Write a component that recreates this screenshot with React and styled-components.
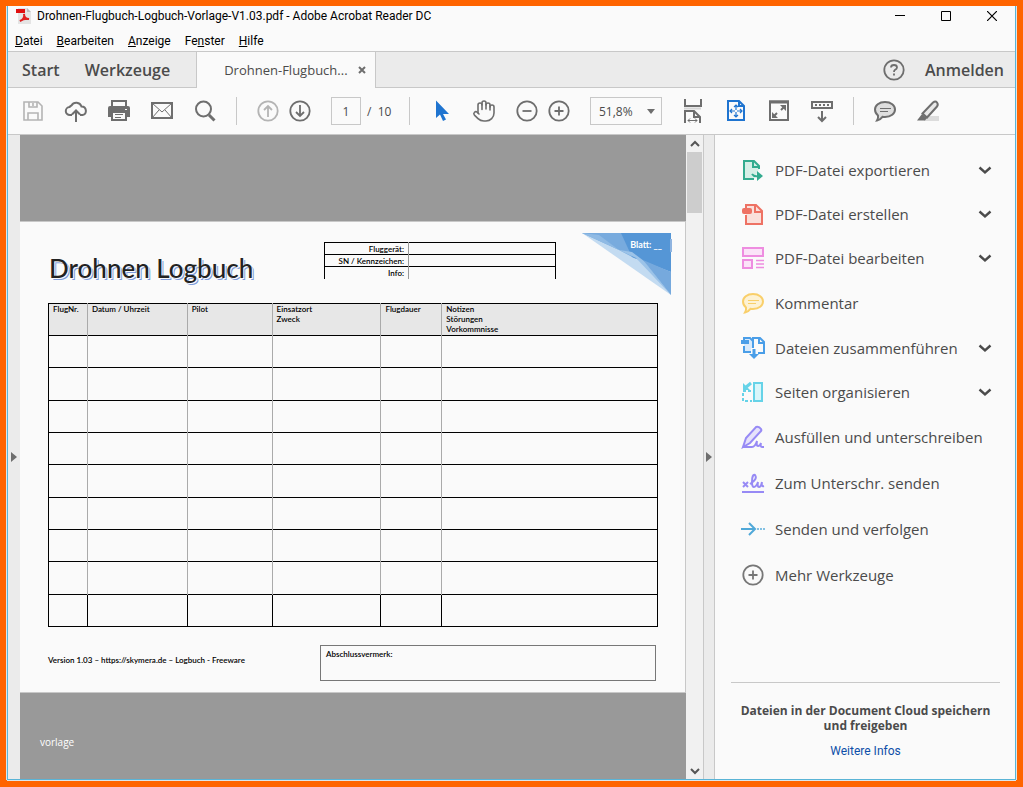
import React from 'react'
import styled, { createGlobalStyle, css } from 'styled-components'
import { Hand } from 'lucide-react'

const GlobalStyle = createGlobalStyle`
  * {
    box-sizing: border-box;
  }
  body {
    margin: 0;
    font-family: "Open Sans", "Noto Sans", sans-serif;
    font-size: 12px;
    color: #4b4b4b;
  }
  button {
    padding: 0;
    border: 0;
    background: none;
    font: inherit;
    color: inherit;
    cursor: pointer;
  }
`;

const Desktop = styled.div`
  display: flex;
  height: 100vh;
  padding: 6px;
  background-color: #ff6400;
`;
const Window = styled.div`
  display: flex;
  flex: 1;
  flex-direction: column;
  min-width: 0;
  border: solid #5ab4d6;
  border-width: 0 1px 1px;
  box-shadow: -1px 0 #dce6ea, 1px 0 #dce6ea, 0 1px #dce6ea;
  margin: 0 1px 1px;
  background-color: #fafafa;
`;

const TitleBar = styled.header`
  display: flex;
  align-items: center;
  height: 20px;
  padding-left: 8px;
  color: #000;
  font-family: Roboto, sans-serif;
`;
const WindowTitle = styled.h1`
  flex: 1;
  margin: 0 0 0 5px;
  font-size: 12px;
  font-weight: 400;
  line-height: 16px;
`;
const WindowButton = styled.button`
  display: flex;
  align-items: center;
  justify-content: center;
  width: 46px;
  height: 20px;
`;
const MenuBar = styled.nav`
  display: flex;
  align-items: center;
  gap: 14px;
  height: 25px;
  padding: 4px 7px 0;
  color: #000;
  font-family: Roboto, sans-serif;
`;

const TabBar = styled.div`
  display: flex;
  height: 37px;
  border: solid #c8c8c8;
  border-width: 1px 0;
  background-color: #ebebeb;
`;
const TabGroup = styled.div`
  display: flex;
  align-items: center;
  gap: 25px;
  padding: 0 26px 0 14px;
`;
const AccountGroup = styled(TabGroup)`
  gap: 19px;
  margin-left: auto;
  padding: 0 11px;
`;
const NavButton = styled.button`
  font-size: 16px;
  font-weight: 600;
  line-height: 20px;
`;
const DocumentTab = styled.div`
  display: flex;
  align-items: center;
  gap: 9px;
  height: 36px;
  padding: 0 8px 0 27px;
  border: solid #c8c8c8;
  border-width: 0 1px;
  background-color: #fafafa;
  font-size: 13px;
`;
const IconButton = styled.button`
  display: flex;
  align-items: center;
  justify-content: center;
  width: ${props => props.$size || 24}px;
  height: ${props => props.$size || 24}px;
  color: ${props => props.$color || '#6e6e6e'};

  &:disabled {
    color: #b4b4b4;
    cursor: default;
  }
`;

const Toolbar = styled.div`
  display: flex;
  align-items: center;
  gap: 19px;
  height: 47px;
  padding-left: 13px;
  border-bottom: 1px solid #c8c8c8;
`;
const ToolPair = styled.div`
  display: flex;
  gap: 8px;
`;
const Divider = styled.div`
  width: 1px;
  height: 28px;
  background-color: #c8c8c8;
`;
const PageField = styled.label`
  display: flex;
  align-items: center;
  gap: 6px;
  width: 59px;
  white-space: pre;
`;
const field = css`
  height: 28px;
  border: 1px solid #c8c8c8;
  border-radius: 0;
  background-color: #fafafa;
  font: inherit;
  color: inherit;
`;
const PageInput = styled.input`
  ${field}
  width: 30px;
  padding: 0;
  text-align: center;
`;
const ZoomField = styled.div`
  display: grid;
  width: 72px;

  > * {
    grid-area: 1 / 1;
  }
  > svg {
    align-self: center;
    justify-self: end;
    margin-right: 7px;
    pointer-events: none;
  }
`;
const ZoomSelect = styled.select`
  ${field}
  width: 100%;
  padding: 0 8px;
  appearance: none;
`;

const Workspace = styled.main`
  display: flex;
  flex: 1;
  min-height: 0;
`;
const Splitter = styled.div`
  display: flex;
  align-items: center;
  justify-content: center;
  width: 12px;
  border: solid #c8c8c8;
  border-width: ${props => (props.$bordered ? '0 1px' : '0')};
  background-color: #ebebeb;
`;
const Viewer = styled.section`
  display: flex;
  flex: 1;
  flex-direction: column;
  min-width: 0;
  padding-top: 86px;
  background-color: #999;
`;
const Caption = styled.p`
  margin: 0;
  padding: 42px 20px 0;
  font-size: 10px;
  line-height: 14px;
  color: #fff;
`;

const Page = styled.article`
  display: flex;
  flex-direction: column;
  height: 472px;
  padding: 11px 0 0 28px;
  border: solid #c8c8c8;
  border-width: 1px 1px 1px 0;
  background-color: #fafafa;
  font-family: Lato, sans-serif;
  font-size: 8px;
  font-weight: 600;
  line-height: 10px;
  color: #000;
`;
const PageHeader = styled.div`
  display: grid;
  grid-template-columns: 276px 232px 1fr;
  height: 70px;
`;
const PageTitle = styled.h2`
  margin: 17px 0 0 1px;
  font-size: 26px;
  font-weight: 500;
  line-height: 36px;
  color: #222;
  text-shadow: 1px 1px 0 #fafafa, 2px 2px 0 #7d9bdc;
`;
const InfoTable = styled.table`
  align-self: start;
  width: 232px;
  margin-top: 9px;
  border-collapse: collapse;
  border: solid #000;
  border-width: 1px 1px 0;

  tr {
    height: 12px;
  }
  tr + tr {
    border-top: 1px solid #000;
  }
  th {
    width: 84px;
    padding: 0 4px 0 0;
    border-right: 1px solid #999;
    font-weight: 600;
    text-align: right;
  }
  td {
    padding: 0;
  }
`;
const SheetMark = styled.div`
  position: relative;
  justify-self: end;
  width: 90px;
  height: 62px;
  margin-right: 13px;

  span {
    position: absolute;
    top: 7px;
    right: 10px;
    color: #fff;
    font-size: 9px;
    font-weight: 700;
  }
`;
const LogTable = styled.table`
  height: 324px;
  margin-right: 27px;
  border-collapse: collapse;
  border: 1px solid #000;
  table-layout: fixed;

  tr {
    height: 32px;
    border-bottom: 1px solid #000;
  }
  th {
    padding: 0 4px;
    background-color: #e7e7e7;
    font-weight: 600;
    text-align: left;
    vertical-align: top;
    white-space: pre-line;
  }
  td {
    padding: 0;
  }
  th + th,
  td + td {
    border-left: 1px solid #aaa;
  }
  tr:last-child td + td {
    border-left-color: #000;
  }
`;
const PageFooter = styled.div`
  display: flex;
  justify-content: space-between;
  margin: 18px 29px 0 0;
`;
const Version = styled.p`
  margin: 10px 0 0;
`;
const Remark = styled.div`
  width: 336px;
  height: 36px;
  padding: 3px 5px;
  border: 1px solid #777;
`;

const ScrollBar = styled.div`
  display: flex;
  flex-direction: column;
  width: 17px;
  background-color: #f1f1f1;
`;
const ScrollThumb = styled.div`
  height: 61px;
  margin: 0 1px auto;
  background-color: #cdcdcd;
`;

const Panel = styled.aside`
  display: flex;
  flex-direction: column;
  justify-content: space-between;
  width: 300px;
`;
const ToolList = styled.div`
  padding-top: 13px;
`;
const Tool = styled.button`
  display: flex;
  align-items: center;
  gap: 10px;
  width: 100%;
  height: ${props => (props.$expandable ? 44 : 46)}px;
  padding: 0 18px 0 26px;
  font-size: 15px;
  text-align: left;

  > svg:first-child {
    color: ${props => props.$color};
  }
  span {
    flex: 1;
    white-space: nowrap;
  }
`;
const CloudPromo = styled.div`
  margin: 0 15px 0 16px;
  padding: 20px 0;
  border-top: 1px solid #c8c8c8;
  line-height: 15px;
  text-align: center;

  p {
    margin: 0 0 10px;
    font-size: 12px;
    font-weight: 700;
  }
  a {
    color: #0d4fa8;
    font-family: Roboto, sans-serif;
    text-decoration: none;
  }
`;

const Icon = ({ children, size = 24, width = 2, ...rest }) => (
  <svg
    width={size}
    height={size}
    viewBox={`0 0 ${size} ${size}`}
    fill="none"
    stroke="currentColor"
    strokeWidth={width}
    aria-hidden="true"
    {...rest}>
    {children}
  </svg>
)

const PdfIcon = () => (
  <Icon size={16} stroke="none">
    <path d="M2 0h9l4 4v12H2z" fill="#e4e4e4" />
    <path d="M11 0l4 4h-4z" fill="#bdbdbd" />
    <path d="M0 1h9v4H0z" fill="#e01010" />
    <path d="M4 13c3-1 5-4 4-7c0 3 2 5 5 5c-3-.5-6 0-9 2z" stroke="#e02020" />
  </Icon>
)

const SaveIcon = () => (
  <Icon width="1.6">
    <path d="M3 3h14l4 4v14H3z" />
    <path d="M8 3v5h8V3M12 4v3M7 21v-7h10v7" />
  </Icon>
)
const CloudIcon = () => (
  <Icon>
    <path d="M8 16H6a4 4 0 0 1-.4-8A3.3 3.3 0 0 1 7.500 6.500A5.500 5.500 0 0 1 17.500 7.500A4.300 4.300 0 0 1 18.500 16H16" />
    <path d="M12 23V11.500M8 15.500l4-4 4 4" />
  </Icon>
)
const PrintIcon = () => (
  <Icon>
    <path d="M1 9q0-2 2-2h18q2 0 2 2v9H1z" fill="currentColor" stroke="none" />
    <path d="M5 7V2h14v5" fill="#fafafa" />
    <path d="M5 13h14v8H5z" fill="#fafafa" />
    <path d="M8 15.500h8M8 18.500h6" strokeWidth="1" />
    <path d="M18 10.500h2" stroke="#fafafa" strokeWidth="1" />
  </Icon>
)
const MailIcon = () => (
  <Icon>
    <path d="M2 4h20v15H2z" />
    <path d="M2 4l10 9 10-9M2 19l7-8M22 19l-7-8" strokeWidth="1" />
  </Icon>
)
const SearchIcon = () => (
  <Icon>
    <circle cx="10.500" cy="10" r="7.500" />
    <path d="M16 16l5.500 5.500" strokeWidth="3" />
  </Icon>
)
const CircleIcon = ({ d }) => (
  <Icon width="1.8">
    <circle cx="12" cy="12" r="9.700" />
    <path d={d} />
  </Icon>
)
const CursorIcon = () => (
  <Icon fill="currentColor" stroke="none">
    <path d="M7 1.500V19l4-3.500L14 22l3-1.500L14 15h6z" />
  </Icon>
)
const FitWidthIcon = () => (
  <Icon>
    <path d="M4 0v7h16V0M4 24V12h9l6 6v6M13 12v6h6" />
    <path d="M3 9.500h17" stroke="#d5d5d5" />
    <path d="M7 21.500h9M9 19.500l-2 2 2 2M14 19.500l2 2-2 2" strokeWidth="1" />
  </Icon>
)
const FitPageIcon = () => (
  <Icon>
    <path d="M4 2h11l5 5v14H4zM15 2v5h5" />
    <path d="M12 6v12M6 12h12M10 8l2-2 2 2M10 16l2 2 2-2M8 10l-2 2 2 2M16 10l2 2-2 2" strokeWidth="1.2" />
    <path d="M11 12h2" stroke="#fafafa" />
  </Icon>
)
const FullScreenIcon = () => (
  <Icon>
    <path d="M3 2.500h18V21H3z" />
    <path d="M2 3h20" strokeWidth="3" />
    <path d="M19 6v6l-6-6zM5 19v-6l6 6z" fill="currentColor" stroke="none" />
    <path d="M17 8l-3 3M7 17l3-3" />
  </Icon>
)
const KeyboardIcon = () => (
  <Icon>
    <path d="M2 3h20v6H2z" fill="#fafafa" />
    <path d="M5 6h14" strokeDasharray="2 2" />
    <path d="M12 12v10M8 18l4 4 4-4" />
  </Icon>
)
const CommentIcon = ({ fill = '#dedede' }) => (
  <Icon>
    <path d="M12 3c6 0 10 3.300 10 7.500S18 18 12 18q-1.500 0-2.500-.2Q7 21 4 21.500Q5.500 19 5 16.500Q2 14 2 10.500C2 6.300 6 3 12 3z" fill={fill} />
    <path d="M7 9.500h11M7 12.500h8" strokeWidth="1" />
  </Icon>
)
const MarkerIcon = () => (
  <Icon>
    <path d="M9 17h14v5H8z" fill="#dcdcdc" stroke="none" />
    <path d="M6.500 14.500L17 3.500q2.500-2 4 0t0 4L11 18.500z" fill="#e8e8e8" />
    <path d="M6 15l5 4-2 2.500H1z" fill="currentColor" stroke="none" />
  </Icon>
)

const ExportIcon = () => (
  <Icon>
    <path d="M18 11V8l-5-5H3v18h10" fill="#d6efe7" />
    <path d="M12 3v6h6" />
    <path d="M11 16q2 3 6 2" />
    <path d="M16 13l6 5-6 5z" fill="currentColor" stroke="none" />
  </Icon>
)
const CreateIcon = () => (
  <Icon>
    <path d="M5 7V3h10l6 6v13H5v-9" fill="#fae0db" />
    <path d="M14 3v7h7" />
    <rect x="1" y="6" width="10" height="6" rx="2" fill="currentColor" stroke="none" />
  </Icon>
)
const EditIcon = () => (
  <Icon>
    <path d="M2 2h20v8H2zM2 14h9v8H2z" fill="#fbe3f8" />
    <path d="M15 14.500h8M15 18h8M15 21.500h8" strokeWidth="1.500" />
  </Icon>
)
const CombineIcon = () => (
  <Icon>
    <path d="M3 6V2h6l3 3v11H3v-6" fill="#d9eafb" />
    <path d="M12 15V2h7l4 4v11h-6M18 2v5h5" />
    <path d="M0 4h8v4H0z" fill="currentColor" stroke="none" />
    <path d="M13 12v7" stroke="#fafafa" strokeWidth="6" />
    <path d="M13 13v7" strokeWidth="3" />
    <path d="M8 18h10l-5 5z" fill="currentColor" stroke="none" />
  </Icon>
)
const OrganizeIcon = () => (
  <Icon>
    <path d="M13 3h8v18h-8z" fill="#d8f6fa" />
    <path d="M10 11H2v10h9" strokeDasharray="3 2" />
    <path d="M10 3L4 8" strokeWidth="3" />
    <path d="M2 3v7h7z" fill="currentColor" stroke="none" />
  </Icon>
)
const FillSignIcon = () => (
  <Icon>
    <path d="M2 22l3-9L15 2q3-1 5 2 1 2-1 3L9 18z" fill="#e6e2fb" />
    <path d="M2 22h9q3 0 5-6-1 5 1 5t3-3q-1 4 1 4h2" />
  </Icon>
)
const SignIcon = () => (
  <Icon>
    <path d="M1 21h22" />
    <path d="M2 11l5 5M7 11l-5 5" />
    <path d="M9 13q8-5 5-9-3-1-3 7 0 5 2 5t4-5q-1 5 1 5t3-5q-1 5 2 4" />
  </Icon>
)
const TrackIcon = () => (
  <Icon>
    <path d="M0 12h13M8 6l6 6-6 6" />
    <path d="M16 12h8" strokeDasharray="2 1" opacity="0.700" />
  </Icon>
)
const Chevron = () => (
  <Icon width="2.400">
    <path d="M6.500 9.500l5.500 5 5.500-5" />
  </Icon>
)

const ARROW_UP = 'M12 18V7M8 11l4-4 4 4'
const ARROW_DOWN = 'M12 6v11M8 13l4 4 4-4'
const MINUS = 'M7.500 12h9'
const PLUS = 'M7.500 12h9M12 7.500v9'

const menus = [
  ['', 'D', 'atei'],
  ['', 'B', 'earbeiten'],
  ['', 'A', 'nzeige'],
  ['Fe', 'n', 'ster'],
  ['', 'H', 'ilfe'],
]

const tools = [
  { label: 'PDF-Datei exportieren', color: '#33ab8f', icon: <ExportIcon />, expandable: true },
  { label: 'PDF-Datei erstellen', color: '#ee7264', icon: <CreateIcon />, expandable: true },
  { label: 'PDF-Datei bearbeiten', color: '#ee8de0', icon: <EditIcon />, expandable: true },
  { label: 'Kommentar', color: '#f9cf6a', icon: <CommentIcon fill="#fdf2d4" /> },
  { label: 'Dateien zusammenführen', color: '#4a9ee8', icon: <CombineIcon />, expandable: true },
  { label: 'Seiten organisieren', color: '#66d3e8', icon: <OrganizeIcon />, expandable: true },
  { label: 'Ausfüllen und unterschreiben', color: '#978af5', icon: <FillSignIcon /> },
  { label: 'Zum Unterschr. senden', color: '#978af5', icon: <SignIcon /> },
  { label: 'Senden und verfolgen', color: '#50a8d8', icon: <TrackIcon /> },
  { label: 'Mehr Werkzeuge', color: '#777', icon: <CircleIcon d={PLUS} /> },
]

const columns = [
  { label: 'FlugNr.', width: 39 },
  { label: 'Datum / Uhrzeit', width: 100 },
  { label: 'Pilot', width: 85 },
  { label: 'Einsatzort\nZweck', width: 109 },
  { label: 'Flugdauer', width: 61 },
  { label: 'Notizen\nStörungen\nVorkommnisse', width: 216 },
]

const LogPage = () => (
  <Page>
    <PageHeader>
      <PageTitle>Drohnen Logbuch</PageTitle>
      <InfoTable>
        <tbody>
          {['Fluggerät:', 'SN / Kennzeichen:', 'Info:'].map(label => (
            <tr key={label}>
              <th scope="row">{label}</th>
              <td />
            </tr>
          ))}
        </tbody>
      </InfoTable>
      <SheetMark>
        <svg width="90" height="62" viewBox="0 0 90 62" aria-hidden="true">
          <path d="M0 0h89v62z" fill="#c3dbf1" />
          <path d="M0 0h42l12 26-17-9z" fill="#78abde" />
          <path d="M17 2l20 15L0 0z" fill="#8fbae4" />
          <path d="M39 0h50v39L50 24z" fill="#5596d6" />
          <path d="M37 17l13 2 12 9 27 34-35-37z" fill="#9cc3e8" />
          <path d="M61 27l28 12v23z" fill="#76a9dd" />
          <path d="M88 6h2v13h-2z" fill="#8fb4e0" />
        </svg>
        <span>Blatt: __</span>
      </SheetMark>
    </PageHeader>
    <LogTable>
      <colgroup>
        {columns.map(({ label, width }) => (
          <col key={label} width={`${width / 6.1}%`} />
        ))}
      </colgroup>
      <thead>
        <tr>
          {columns.map(({ label }) => <th key={label} scope="col">{label}</th>)}
        </tr>
      </thead>
      <tbody>
        {Array.from({ length: 9 }, (_, row) => (
          <tr key={row}>
            {columns.map(({ label }) => <td key={label} />)}
          </tr>
        ))}
      </tbody>
    </LogTable>
    <PageFooter>
      <Version>Version 1.03 – https://skymera.de – Logbuch - Freeware</Version>
      <Remark>Abschlussvermerk:</Remark>
    </PageFooter>
  </Page>
)

const AppToolbar = () => (
  <Toolbar>
    <IconButton disabled aria-label="Speichern"><SaveIcon /></IconButton>
    <IconButton aria-label="Hochladen"><CloudIcon /></IconButton>
    <IconButton aria-label="Drucken"><PrintIcon /></IconButton>
    <IconButton aria-label="E-Mail"><MailIcon /></IconButton>
    <IconButton aria-label="Suchen"><SearchIcon /></IconButton>
    <Divider />
    <ToolPair>
      <IconButton disabled aria-label="Vorherige Seite"><CircleIcon d={ARROW_UP} /></IconButton>
      <IconButton aria-label="Nächste Seite"><CircleIcon d={ARROW_DOWN} /></IconButton>
    </ToolPair>
    <PageField>
      <PageInput defaultValue="1" aria-label="Seite" />
      {'/  10'}
    </PageField>
    <Divider />
    <IconButton $color="#1f74d0" aria-label="Auswahl"><CursorIcon /></IconButton>
    <IconButton aria-label="Hand"><Hand size={26} strokeWidth={1.6} /></IconButton>
    <ToolPair>
      <IconButton aria-label="Verkleinern"><CircleIcon d={MINUS} /></IconButton>
      <IconButton aria-label="Vergrößern"><CircleIcon d={PLUS} /></IconButton>
    </ToolPair>
    <ZoomField>
      <ZoomSelect aria-label="Zoom">
        <option>51,8%</option>
      </ZoomSelect>
      <svg width="8" height="5" aria-hidden="true"><path d="M0 0h8L4 5z" fill="#6e6e6e" /></svg>
    </ZoomField>
    <IconButton aria-label="Breite"><FitWidthIcon /></IconButton>
    <IconButton $color="#1f74d0" aria-label="Ganze Seite"><FitPageIcon /></IconButton>
    <IconButton aria-label="Vollbild"><FullScreenIcon /></IconButton>
    <IconButton aria-label="Leiste"><KeyboardIcon /></IconButton>
    <Divider />
    <IconButton aria-label="Notiz"><CommentIcon /></IconButton>
    <IconButton aria-label="Hervorheben"><MarkerIcon /></IconButton>
  </Toolbar>
)

const Triangle = () => (
  <svg width="6" height="10" aria-hidden="true"><path d="M0 0l6 5-6 5z" fill="#6e6e6e" /></svg>
)

const ScrollArrow = ({ label, d }) => (
  <IconButton $size={17} $color="#555" aria-label={label}>
    <Icon size={17}><path d={d} /></Icon>
  </IconButton>
)

const App = () => (
  <Desktop>
    <GlobalStyle />
    <Window>
      <TitleBar>
        <PdfIcon />
        <WindowTitle>Drohnen-Flugbuch-Logbuch-Vorlage-V1.03.pdf - Adobe Acrobat Reader DC</WindowTitle>
        <WindowButton aria-label="Minimieren">
          <Icon size={10} width="1"><path d="M0 4.500h10" /></Icon>
        </WindowButton>
        <WindowButton aria-label="Maximieren">
          <Icon size={10} width="1"><path d="M.5.500h9v9h-9z" /></Icon>
        </WindowButton>
        <WindowButton aria-label="Schließen">
          <Icon size={10} width="1.200"><path d="M0 0l10 10M10 0L0 10" /></Icon>
        </WindowButton>
      </TitleBar>
      <MenuBar>
        {menus.map(([before, key, after]) => (
          <button key={after}>{before}<u>{key}</u>{after}</button>
        ))}
      </MenuBar>
      <TabBar>
        <TabGroup>
          <NavButton>Start</NavButton>
          <NavButton>Werkzeuge</NavButton>
        </TabGroup>
        <DocumentTab>
          Drohnen-Flugbuch...
          <IconButton $size={10} aria-label="Tab schließen">
            <Icon size={10}><path d="M2 2l6 6M8 2L2 8" /></Icon>
          </IconButton>
        </DocumentTab>
        <AccountGroup>
          <IconButton aria-label="Hilfe">
            <CircleIcon d="M9 9.500q0-2.500 3-2.500t3 2.500q0 1.500-2 2.300-1 .5-1 2.200M12 15.500v2" />
          </IconButton>
          <NavButton>Anmelden</NavButton>
        </AccountGroup>
      </TabBar>
      <AppToolbar />
      <Workspace>
        <Splitter><Triangle /></Splitter>
        <Viewer>
          <LogPage />
          <Caption>vorlage</Caption>
        </Viewer>
        <ScrollBar>
          <ScrollArrow label="Nach oben" d="M5 11l4-4 4 4" />
          <ScrollThumb />
          <ScrollArrow label="Nach unten" d="M5 7l4 4 4-4" />
        </ScrollBar>
        <Splitter $bordered><Triangle /></Splitter>
        <Panel>
          <ToolList>
            {tools.map(({ label, color, icon, expandable }) => (
              <Tool key={label} $color={color} $expandable={expandable}>
                {icon}
                <span>{label}</span>
                {expandable && <Chevron />}
              </Tool>
            ))}
          </ToolList>
          <CloudPromo>
            <p>Dateien in der Document Cloud speichern und freigeben</p>
            <a href="#infos">Weitere Infos</a>
          </CloudPromo>
        </Panel>
      </Workspace>
    </Window>
  </Desktop>
)

export default App;
